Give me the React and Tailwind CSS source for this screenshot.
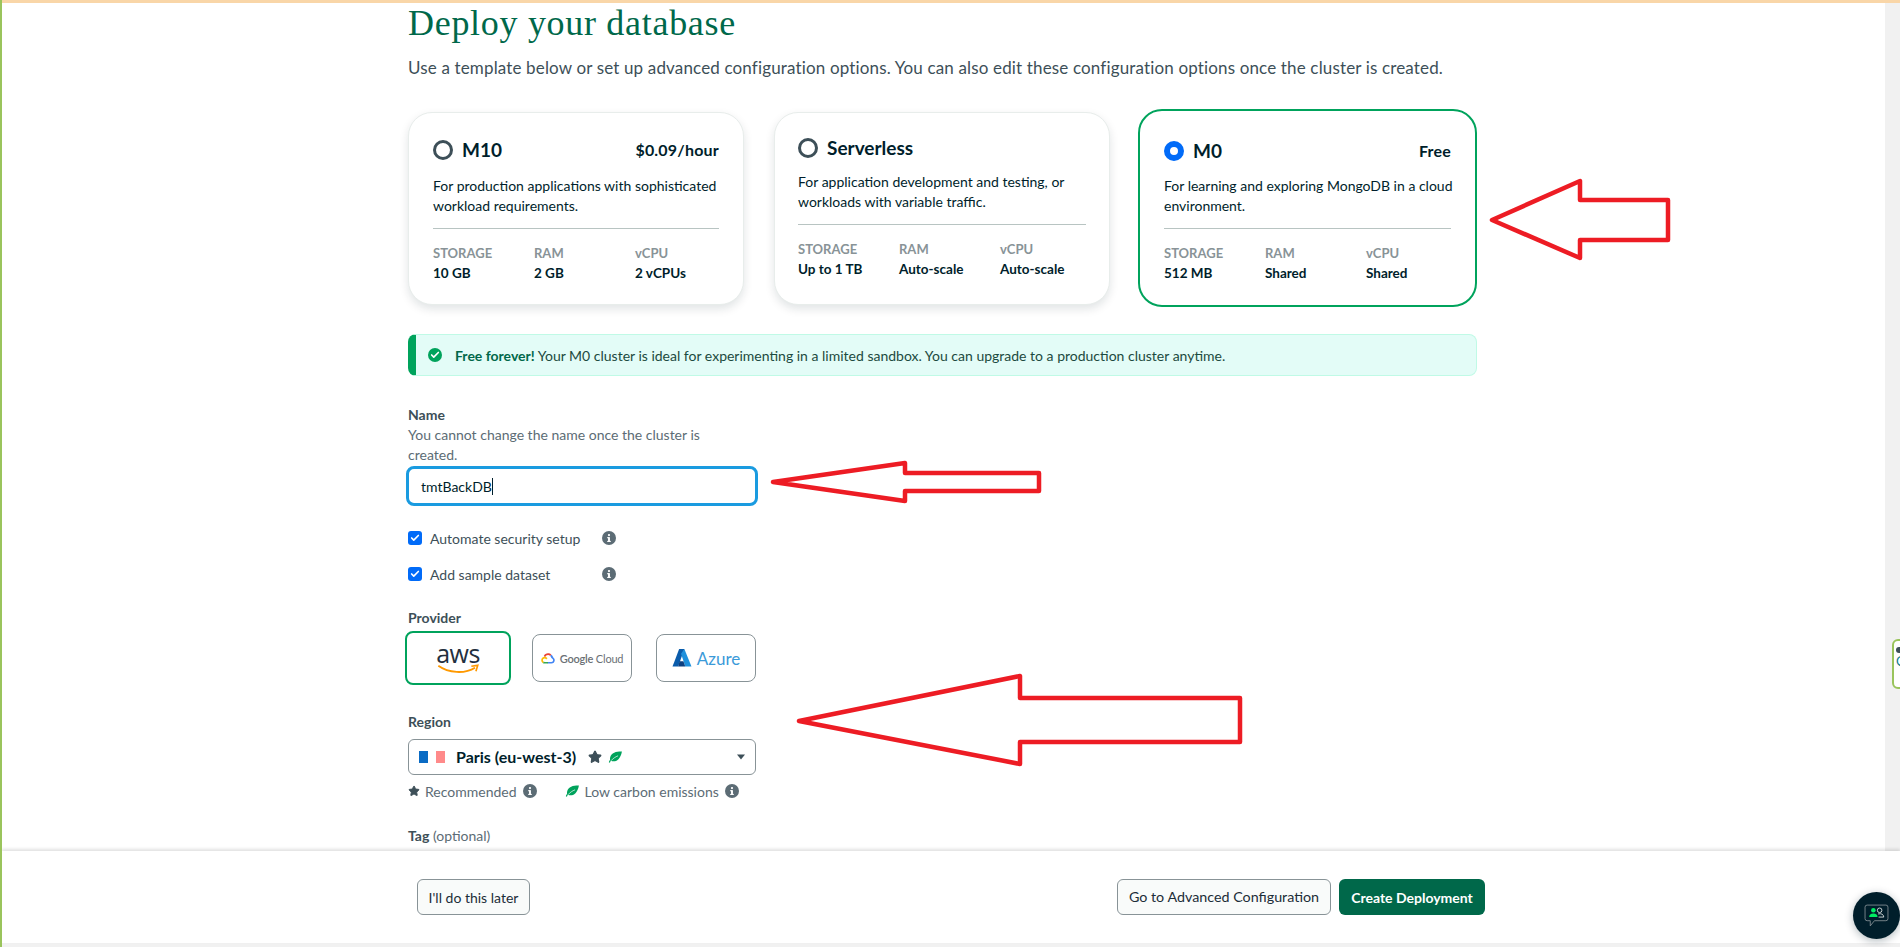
import { Check, Star } from "lucide-react";

const cards = [
  {
    name: "M10",
    price: "$0.09/hour",
    text: ["For production applications with sophisticated", "workload requirements."],
    specs: [
      ["STORAGE", "10 GB"],
      ["RAM", "2 GB"],
      ["vCPU", "2 vCPUs"],
    ],
    box: "mt-[3px] h-[193px] w-[336px] rounded-[24px] border border-[#e8edeb] px-[24px] pt-[25px] shadow-[0_4px_10px_rgba(0,30,43,0.12)]",
    textGap: "mt-[14px]",
    selected: false,
  },
  {
    name: "Serverless",
    text: ["For application development and testing, or", "workloads with variable traffic."],
    specs: [
      ["STORAGE", "Up to 1 TB"],
      ["RAM", "Auto-scale"],
      ["vCPU", "Auto-scale"],
    ],
    box: "ml-[30px] mt-[3px] h-[193px] w-[336px] rounded-[24px] border border-[#e8edeb] px-[23px] pt-[23px] shadow-[0_4px_10px_rgba(0,30,43,0.12)]",
    textGap: "mt-[12px]",
    selected: false,
  },
  {
    name: "M0",
    price: "Free",
    text: ["For learning and exploring MongoDB in a cloud", "environment."],
    specs: [
      ["STORAGE", "512 MB"],
      ["RAM", "Shared"],
      ["vCPU", "Shared"],
    ],
    box: "ml-[28px] h-[198px] w-[339px] rounded-[24px] border-2 border-[#00a35c] px-[24px] pt-[28px]",
    textGap: "mt-[13px]",
    selected: true,
  },
];

function InfoIcon({ className = "h-[14px] w-[14px]" }) {
  return (
    <svg viewBox="0 0 16 16" className={className}>
      <circle cx="8" cy="8" r="8" fill="#5c6c75" />
      <rect x="6.9" y="7" width="2.2" height="5.4" rx="0.4" fill="#fff" />
      <rect x="5.9" y="7" width="2.6" height="1.3" fill="#fff" />
      <rect x="5.9" y="11.3" width="4.2" height="1.2" fill="#fff" />
      <circle cx="8" cy="4.6" r="1.3" fill="#fff" />
    </svg>
  );
}

function LeafIcon() {
  return (
    <svg viewBox="0 0 16 14" className="h-[12px] w-[15px]">
      <path d="M15.5 0.5C9 0.4 3.2 1.6 1.8 7.2 1.5 8.4 1.5 9.4 1.7 10.2 0.9 11 0.4 12 0.2 13.2L1.5 13.6C1.8 12.7 2.2 12 2.7 11.4 6.9 13.4 13.6 11.2 15.5 0.5Z" fill="#00a35c" />
      <path d="M2.7 11.4C5 8.7 8 6.8 11 5.6" fill="none" stroke="#fff" strokeWidth="0.8" />
    </svg>
  );
}

function RedArrows() {
  return (
    <svg viewBox="0 0 1900 947" className="pointer-events-none absolute left-0 top-0 z-20 h-[947px] w-[1900px]">
      <g fill="none" stroke="#ed1c24" strokeWidth="4.5" strokeLinejoin="round">
        <path d="M1490 220 L1578 181 L1578 200 L1666 200 L1666 240 L1578 240 L1578 258 Z" />
        <path d="M771 482 L903 463 L903 473 L1037 473 L1037 491 L903 491 L903 501 Z" />
        <path d="M797 721 L1018 676 L1018 698 L1238 698 L1238 742 L1018 742 L1018 764 Z" />
      </g>
    </svg>
  );
}

function PlanCard({ card }) {
  return (
    <div className={`shrink-0 bg-white ${card.box}`}>
      <div className="flex items-center justify-between">
        <div className="flex items-center gap-[9px]">
          {card.selected ? (
            <span className="h-[20px] w-[20px] rounded-full border-[6px] border-[#016bf8] bg-white" />
          ) : (
            <span className="h-[20px] w-[20px] rounded-full border-[3px] border-[#3d4f58]" />
          )}
          <span className="text-[19px] font-bold leading-[24px] text-[#001e2b]">{card.name}</span>
        </div>
        {card.price && <span className="text-[16px] font-bold leading-[24px] tracking-[0.2px] text-[#001e2b]">{card.price}</span>}
      </div>
      <div className={`${card.textGap} whitespace-nowrap text-[14px] leading-[20px] text-[#001e2b]`}>
        {card.text.map((line) => (
          <p key={line}>{line}</p>
        ))}
      </div>
      <div className="mt-[12px] grid grid-cols-[101px_101px_1fr] border-t border-[#b8c4c2] pt-[14px]">
        {card.specs.map(([label, value]) => (
          <div key={label}>
            <p className="text-[13px] font-bold leading-[20px] text-[#889397]">{label}</p>
            <p className="text-[13.5px] font-bold leading-[20px] text-[#001e2b]">{value}</p>
          </div>
        ))}
      </div>
    </div>
  );
}

function CheckRow({ label, className }) {
  return (
    <div className={`flex h-[20px] items-center ${className}`}>
      <span className="flex h-[14px] w-[14px] items-center justify-center rounded-[3px] bg-[#016bf8]">
        <Check className="h-[10px] w-[10px] text-white" strokeWidth={4} />
      </span>
      <span className="ml-[8px] w-[172px] text-[14px] text-[#3d4f58]">{label}</span>
      <InfoIcon />
    </div>
  );
}

function ProviderLogos() {
  return (
    <div className="-ml-[3px] mt-[3px] flex items-center">
      <div className="flex h-[54px] w-[106px] flex-col items-center justify-center rounded-[8px] border-[2.5px] border-[#00a35c]">
        <span className="text-[25px] leading-[22px] tracking-[-0.5px] text-[#232f3e] [font-family:'Open_Sans',sans-serif]">aws</span>
        <svg viewBox="0 0 46 12" className="h-[11px] w-[45px]">
          <path d="M1 2C12 10 30 11 41 4" fill="none" stroke="#f90" strokeWidth="2" />
          <path d="M37 2.5L44 1.5 42 8" fill="none" stroke="#f90" strokeWidth="1.8" />
        </svg>
      </div>
      <div className="ml-[21px] flex h-[48px] w-[100px] items-center justify-center gap-[5px] rounded-[8px] border border-[#889397]">
        <svg viewBox="0 0 16 13" className="h-[11px] w-[14px]">
          <path d="M10.6 3.5L12 2.1C11 1 9.600 0.400 8 0.400 5.800 0.400 3.900 1.700 3 3.600L4.700 4.900C5.300 3.500 6.500 2.500 8 2.500 9 2.500 9.900 2.900 10.600 3.500Z" fill="#ea4335" />
          <path d="M13.700 4.200C13.300 3.300 12.700 2.600 12 2.100L10.600 3.500C11.300 4.100 11.800 5 11.900 6L13.800 6.200 14.400 5.600C14.200 5.100 14 4.600 13.700 4.200Z" fill="#4285f4" />
          <path d="M12 12.500C14.200 12.500 16 10.700 16 8.500 16 7.400 15.400 6.200 14.400 5.600L12 6.400C13.100 6.400 14 7.300 14 8.500 14 9.600 13.100 10.500 12 10.500L8 10.500 7 11.500 8 12.500Z" fill="#4285f4" />
          <path d="M4 12.500L8 12.500 8 10.500 4 10.500C3.700 10.500 3.400 10.400 3.200 10.300L1.700 11.800C2.400 12.200 3.200 12.500 4 12.500Z" fill="#34a853" />
          <path d="M4 4.500C1.800 4.500 0 6.300 0 8.500 0 9.900 0.700 11.100 1.700 11.800L3.200 10.300C2.500 10 2 9.300 2 8.500 2 7.400 2.900 6.500 4 6.500 4.800 6.500 5.500 7 5.800 7.700L7.400 6.200C6.700 5.200 5.400 4.500 4 4.500Z" fill="#fbbc05" />
        </svg>
        <span className="text-[11px] leading-none tracking-[-0.2px] text-[#6b7075]">
          <span className="font-semibold">Google</span> Cloud
        </span>
      </div>
      <div className="ml-[24px] flex h-[48px] w-[100px] items-center justify-center gap-[5px] rounded-[8px] border border-[#889397]">
        <svg viewBox="0 0 20 19" className="h-[18px] w-[20px]">
          <path d="M7 0L12.500 0 6 18.500 0 18.500Z" fill="#0a5cab" />
          <path d="M12.500 0L20 18.500 13.500 18.500 9 5Z" fill="#1e90dc" />
          <path d="M6 18.500L13.500 18.500 11.500 13 7.500 13Z" fill="#0c3f7f" />
        </svg>
        <span className="text-[17px] leading-none text-[#3b9ad9]">Azure</span>
      </div>
    </div>
  );
}

function SelectRegion() {
  return (
    <div className="mt-[7px] flex h-[36px] w-[348px] items-center rounded-[6px] border border-[#889397] pl-[10px] pr-[10px]">
      <span className="flex h-[12px] w-[26px] items-stretch">
        <span className="w-[9px] bg-[#0a6bc4]" />
        <span className="w-[8px] bg-white" />
        <span className="w-[9px] bg-[#ff8a8a]" />
      </span>
      <span className="ml-[11px] text-[16px] font-bold text-[#001e2b]">Paris (eu-west-3)</span>
      <Star className="ml-[12px] h-[14px] w-[14px] fill-[#3d4f58] text-[#3d4f58]" />
      <span className="ml-[6px] flex">
        <LeafIcon />
      </span>
      <svg viewBox="0 0 10 6" className="ml-auto h-[6px] w-[8px]">
        <path d="M0 0H10L5 6Z" fill="#3d4f58" />
      </svg>
    </div>
  );
}

function ChatButton() {
  return (
    <div className="absolute left-[1851px] top-[892px] z-30 flex h-[47px] w-[47px] items-center justify-center rounded-full bg-[#001e2b] shadow-[0_2px_8px_rgba(0,30,43,0.3)]">
      <svg viewBox="0 0 24 24" className="h-[25px] w-[25px]">
        <path d="M3 2H21Q23 2 23 4V15Q23 17 21 17H10L6 22V17H3Q1 17 1 15V4Q1 2 3 2Z" fill="none" stroke="#889397" strokeWidth="0.8" />
        <circle cx="9" cy="7" r="2.200" fill="#00ed64" />
        <path d="M5 13.500Q5 10 9 10T13 13.500Z" fill="#00ed64" />
        <circle cx="15" cy="7" r="2.200" fill="none" stroke="#e8edeb" strokeWidth="0.8" />
        <path d="M13.500 10.500Q18.500 9.500 19 13.500H14" fill="none" stroke="#e8edeb" strokeWidth="0.8" />
      </svg>
    </div>
  );
}

export default function App() {
  return (
    <div className="relative flex h-[947px] w-full flex-col overflow-hidden border-l-2 border-[#9ac45c] bg-white [font-family:Lato,sans-serif]">
      <div className="h-[3px] shrink-0 bg-[#f9d6a8]" />

      <div className="flex min-h-0 flex-1">
        <main className="min-w-0 flex-1 overflow-hidden pl-[406px]">
          <h1 className="text-[36px] leading-[40px] tracking-[0.7px] text-[#00684a] [font-family:'Liberation_Serif',serif]">Deploy your database</h1>
          <p className="mt-[13px] text-[17px] leading-[24px] tracking-[0.15px] text-[#3d4f58]">
            Use a template below or set up advanced configuration options. You can also edit these configuration options once the cluster is created.
          </p>

          <div className="mt-[29px] flex items-start">
            {cards.map((card) => (
              <PlanCard key={card.name} card={card} />
            ))}
          </div>

          <div className="mt-[27px] flex h-[42px] w-[1069px] items-center rounded-[8px] border border-[#c0fae6] border-l-[8px] border-l-[#00a35c] bg-[#e3fcf7] pl-[12px] text-[14px] text-[#1c4a40]">
            <span className="flex h-[14px] w-[14px] items-center justify-center rounded-full bg-[#00a35c]">
              <Check className="h-[10px] w-[10px] text-white" strokeWidth={4} />
            </span>
            <span className="ml-[13px]">
              <b className="text-[#00684a]">Free forever!</b> Your M0 cluster is ideal for experimenting in a limited sandbox. You can upgrade to a production cluster anytime.
            </span>
          </div>

          <p className="mt-[29px] text-[14px] font-bold leading-[20px] text-[#3d4f58]">Name</p>
          <p className="w-[320px] text-[14px] leading-[20px] text-[#5c6c75]">
            You cannot change the name once the cluster is created.
          </p>
          <div className="-ml-[2px] mt-[1px] flex h-[40px] w-[352px] items-center rounded-[8px] border-[3px] border-[#1a9be0] pl-[12px] text-[14px] text-[#001e2b]">
            tmtBackDB<span className="h-[17px] w-px bg-[#001e2b]" />
          </div>

          <CheckRow label="Automate security setup" className="mt-[22px]" />
          <CheckRow label="Add sample dataset" className="mt-[16px]" />

          <p className="mt-[24px] text-[14px] font-bold leading-[20px] text-[#3d4f58]">Provider</p>
          <ProviderLogos />

          <p className="mt-[27px] text-[14px] font-bold leading-[20px] text-[#3d4f58]">Region</p>
          <SelectRegion />

          <div className="mt-[6px] flex h-[20px] items-center text-[14px] text-[#5c6c75]">
            <Star className="h-[12px] w-[12px] fill-[#3d4f58] text-[#3d4f58]" />
            <span className="ml-[5px]">Recommended</span>
            <span className="ml-[6px]"><InfoIcon /></span>
            <span className="ml-[28px] flex"><LeafIcon /></span>
            <span className="ml-[5px]">Low carbon emissions</span>
            <span className="ml-[6px]"><InfoIcon /></span>
          </div>

          <p className="mt-[25px] text-[14px] leading-[20px] text-[#5c6c75]">
            <b className="text-[#3d4f58]">Tag</b> (optional)
          </p>
          <p className="text-[14px] leading-[20px] text-[#5c6c75]">
            Create your first tag to categorize and label your resources; more tags can be added later.
          </p>
        </main>
        <div className="relative w-[15px] shrink-0 bg-[#f1f1f1]" />
      </div>

      <footer className="relative z-10 flex h-[92px] shrink-0 justify-between bg-white pl-[415px] pr-[415px] pt-[28px] shadow-[0_-2px_3px_rgba(0,0,0,0.12)]">
        <button type="button" className="h-[36px] w-[113px] rounded-[6px] border border-[#889397] bg-[#f9fbfa] text-[14px] text-[#1c2d38]">
          I'll do this later
        </button>
        <div className="flex gap-[8px]">
          <button type="button" className="h-[36px] w-[214px] rounded-[6px] border border-[#889397] bg-[#f9fbfa] text-[14.3px] text-[#1c2d38]">
            Go to Advanced Configuration
          </button>
          <button type="button" className="h-[36px] w-[146px] rounded-[6px] bg-[#00684a] text-[14px] font-bold text-white">
            Create Deployment
          </button>
        </div>
      </footer>
      <div className="h-[4px] shrink-0 bg-[#f1f1f1]" />

      <div className="absolute left-[1890px] top-[639px] z-10 h-[50px] w-[20px] rounded-l-[6px] border-2 border-[#9ac45c] bg-white pl-[2px] text-[13px] leading-[16px] text-[#0a7a8a]">
        <span className="mt-[6px] block h-[6px] w-[6px] rounded-full bg-[#3d4f58]" />C
      </div>
      <RedArrows />
      <ChatButton />
    </div>
  );
}
